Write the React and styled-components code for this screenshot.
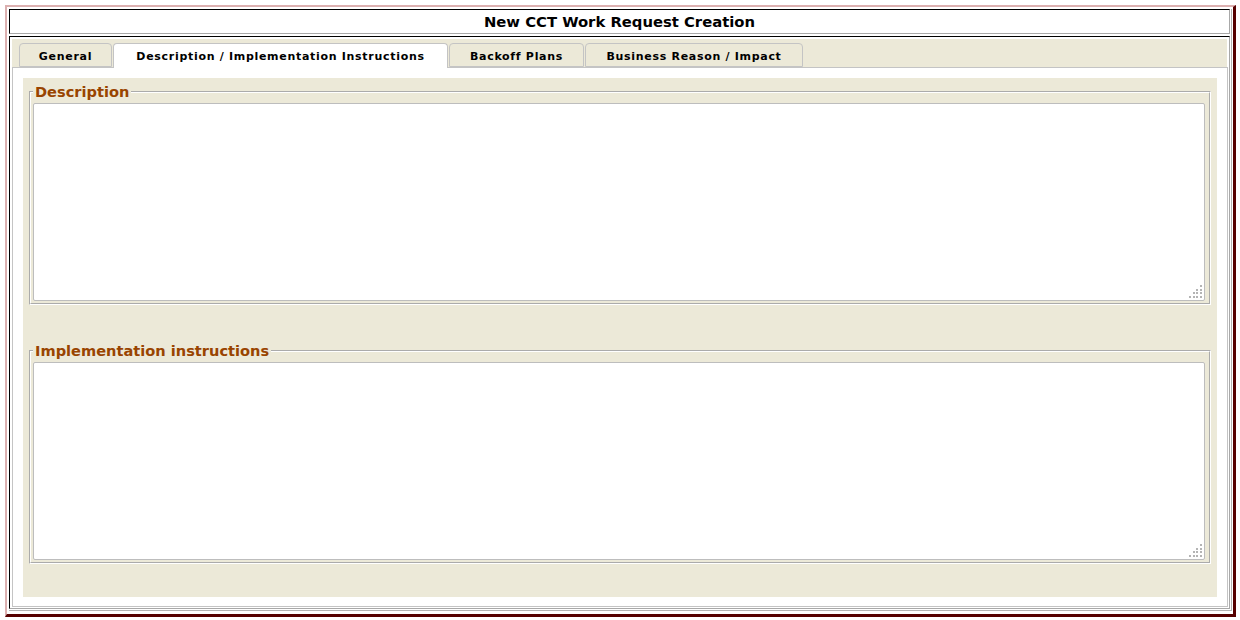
import React from "react";
import styled, { createGlobalStyle } from "styled-components";

const Global = createGlobalStyle`
  html, body { margin: 0; padding: 0; background: #fff; }
  body { font-family: "DejaVu Sans", Verdana, sans-serif; }
  * { box-sizing: border-box; }
`;

const Frame = styled.div`
  margin: 5px 0 0 5px;
  width: 1231px;
  height: 612px;
  border-top: 2px solid #dcb0b0;
  border-left: 2px solid #dcb0b0;
  border-right: 3px solid #560000;
  border-bottom: 3px solid #560000;
  padding: 2px 1px 3px 2px;
  background: #fff;
  display: flex;
`;

const Wrapper = styled.div`
  flex: 1;
  display: flex;
  flex-direction: column;
  gap: 2px;
  border-right: 1px solid #b4b4b4;
  border-bottom: 1px solid #b4b4b4;
  padding: 0 1px 1px 0;
`;

const TitleBar = styled.div`
  height: 25px;
  border-top: 1px solid #000;
  border-left: 1px solid #000;
  border-right: 1px solid #a8a8a8;
  border-bottom: 1px solid #a8a8a8;
  display: flex;
  align-items: center;
  justify-content: center;
  font-weight: bold;
  font-size: 14.8px;
  color: #000;
`;

const ContentBox = styled.div`
  flex: 1;
  display: flex;
  flex-direction: column;
  border-top: 1px solid #000;
  border-left: 1px solid #000;
  border-right: 1px solid #a8a8a8;
  border-bottom: 1px solid #a8a8a8;
  padding: 2px 1px 1px 2px;
`;

const TabStrip = styled.div`
  height: 28px;
  background: #ece9d8;
  display: flex;
  align-items: flex-end;
  gap: 1px;
  padding-left: 7px;
  margin-right: 1px;
  position: relative;
  z-index: 1;
`;

const Tab = styled.div`
  width: ${(p) => p.$width}px;
  height: ${(p) => (p.$active ? "25px" : "24px")};
  margin-bottom: ${(p) => (p.$active ? "-1px" : "0")};
  padding-top: ${(p) => (p.$active ? "1px" : "2px")};
  display: flex;
  align-items: center;
  justify-content: center;
  font-size: 11px;
  font-weight: bold;
  letter-spacing: 0.7px;
  color: #000;
  background: ${(p) => (p.$active ? "#fff" : "#ece9d8")};
  border: 1px solid #c4c4c4;
  border-bottom: ${(p) => (p.$active ? "none" : "1px solid #c4c4c4")};
  border-radius: 4px 4px 0 0;
  white-space: nowrap;
`;

const Panel = styled.div`
  flex: 1;
  background: #fff;
  border: 1px solid #c4c4c4;
  padding: 10px 10px 9px 10px;
  display: flex;
`;

const Sheet = styled.div`
  flex: 1;
  background: #ece9d8;
  padding: 5px 6px 0 6px;
  display: flex;
  flex-direction: column;
  gap: 37px;
`;

const Group = styled.fieldset`
  margin: 0;
  padding: 3px 4px 2px 2px;
  border: 2px groove #fff;
  min-width: 0;
`;

const Legend = styled.legend`
  padding: 0 2px;
  font-size: 14.6px;
  line-height: 17px;
  font-weight: bold;
  color: #994400;
`;

const AreaWrap = styled.div`
  position: relative;
  display: flex;
`;

const Area = styled.textarea`
  flex: 1;
  height: 198px;
  border: 1px solid #bdbdbd;
  border-radius: 2px;
  background: #fff;
  resize: none;
  outline: none;
  margin: 0;
  padding: 2px;
  font-family: "DejaVu Sans", Verdana, sans-serif;
  font-size: 12px;
`;

const Grip = styled.svg`
  position: absolute;
  right: 3px;
  bottom: 3px;
  pointer-events: none;
`;

const dots = [
  [11, 0],
  [7, 4], [11, 4],
  [4, 7], [7, 7], [11, 7],
  [0, 11], [4, 11], [7, 11], [11, 11],
];

function ResizeGrip() {
  return (
    <Grip width="13" height="13" viewBox="0 0 13 13">
      {dots.map(([x, y], i) => (
        <rect key={i} x={x} y={y} width="2" height="2" fill="#b4b4b4" />
      ))}
    </Grip>
  );
}

function TextGroup({ label }) {
  return (
    <Group>
      <Legend>{label}</Legend>
      <AreaWrap>
        <Area />
        <ResizeGrip />
      </AreaWrap>
    </Group>
  );
}

const tabs = [
  { label: "General", width: 93 },
  { label: "Description / Implementation Instructions", width: 335 },
  { label: "Backoff Plans", width: 135 },
  { label: "Business Reason / Impact", width: 218 },
];

export default function App() {
  return (
    <>
      <Global />
      <Frame>
        <Wrapper>
          <TitleBar>New CCT Work Request Creation</TitleBar>
          <ContentBox>
            <TabStrip>
              {tabs.map((t, i) => (
                <Tab key={t.label} $width={t.width} $active={i === 1}>
                  {t.label}
                </Tab>
              ))}
            </TabStrip>
            <Panel>
              <Sheet>
                <TextGroup label="Description" />
                <TextGroup label="Implementation instructions" />
              </Sheet>
            </Panel>
          </ContentBox>
        </Wrapper>
      </Frame>
    </>
  );
}
